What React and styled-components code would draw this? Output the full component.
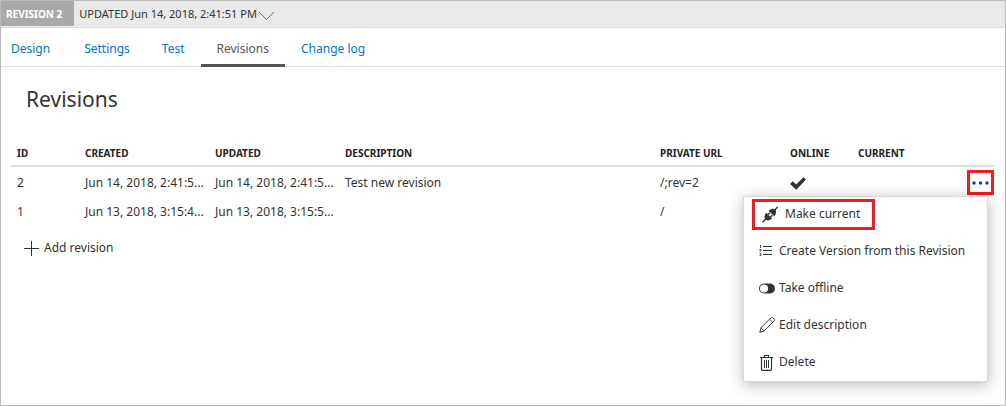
import React from "react";
import styled, { createGlobalStyle, css } from "styled-components";

const GlobalStyle = createGlobalStyle`
  *, *::before, *::after { box-sizing: border-box; }
  body {
    margin: 0;
    background: #fff;
    color: #333;
    font-family: "Noto Sans", "Open Sans", sans-serif;
    font-size: 12px;
    line-height: 18px;
  }
  button { font: inherit; color: inherit; background: none; border: 0; padding: 0; cursor: pointer; }
`;

const Frame = styled.div`
  min-height: 100vh;
  border: 1px solid #bbb;
`;

const RevisionBar = styled.header`
  display: flex;
  height: 27px;
  background: #e9e9e9;
  border-bottom: 1px solid #dcdcdc;
`;

const RevisionBadge = styled.span`
  height: 25px;
  padding: 0 12px 0 5px;
  background: #a9a9a9;
  color: #fff;
  font-size: 10px;
  font-weight: 700;
  line-height: 26px;
`;

const RevisionPicker = styled.button`
  display: flex;
  align-items: center;
  gap: 1px;
  margin-left: 5px;
  font-size: 11px;
`;

const Tabs = styled.nav`
  display: flex;
  height: 39px;
  border-bottom: 1px solid #ddd;
`;

const Tab = styled.a`
  height: 39px;
  padding: 0 16px;
  color: #0072d6;
  line-height: 41px;
  text-decoration: none;

  &:first-child { padding: 0 18px 0 10px; }

  ${(p) => p.$active && css`
    color: #555;
    border-bottom: 3px solid #555;
  `}
`;

const Content = styled.main`
  padding: 16px 11px 16px 10px;
`;

const Title = styled.h1`
  margin: 0 0 20px;
  padding-left: 15px;
  font-size: 21px;
  font-weight: 400;
  line-height: 32px;
`;

const Table = styled.table`
  width: 100%;
  border-collapse: separate;
  border-spacing: 0;
  table-layout: fixed;
`;

const Col = styled.col`
  width: ${(p) => p.$width};
`;

const HeadCell = styled.th`
  height: 32px;
  padding: 0 0 4px 6px;
  border-bottom: 2px solid #ddd;
  color: #222;
  font-size: 10px;
  font-weight: 700;
  line-height: 16px;
  text-align: left;
  vertical-align: bottom;
`;

const Cell = styled.td`
  height: 29px;
  padding: 2px 0 0 6px;
  white-space: nowrap;
`;

const ActionCell = styled(Cell)`
  padding-left: 0;
`;

const Actions = styled.div`
  position: relative;
  display: flex;
  justify-content: flex-end;
`;

const MoreButton = styled.button`
  display: flex;
  align-items: center;
  justify-content: center;
  width: 27px;
  height: 25px;
  border: 3px solid #ee1c25;
`;

const Menu = styled.div`
  position: absolute;
  top: 100%;
  right: 6px;
  width: 245px;
  margin-top: 1px;
  padding-bottom: 1px;
  border: 1px solid #d9d9d9;
  background: #fff;
  box-shadow: 0 3px 14px rgba(0, 0, 0, 0.28);
`;

const MenuItem = styled.button`
  display: flex;
  align-items: center;
  gap: 3px;
  width: 100%;
  height: 37px;
  padding-left: 15px;
  white-space: nowrap;

  ${(p) => p.$highlighted && css`
    gap: 6px;
    width: 123px;
    height: 31px;
    margin: 2px 0 2px 8px;
    padding: 0 0 2px 7px;
    border: 3px solid #ee1c25;
  `}
`;

const AddButton = styled.button`
  display: flex;
  align-items: center;
  gap: 4px;
  margin-top: 14px;
  padding-left: 13px;
`;

const Icon = styled.svg`
  display: block;
  flex: none;
`;

const ChevronIcon = () => (
  <Icon width="17" height="18" viewBox="0 0 17 18" fill="none" stroke="#806a5c">
    <path d="M1 7l7.500 7.500L16 7" />
  </Icon>
);

const CheckIcon = () => (
  <Icon width="16" height="14" viewBox="0 0 16 14" fill="#333" role="img" aria-label="Yes">
    <path d="M0 8L2.800 5.200 6.200 8.600 13.400 1.200 16 3.600 6.300 13.800z" />
  </Icon>
);

const DotsIcon = () => (
  <Icon width="17" height="4" viewBox="0 0 17 4" fill="#004b8d">
    <circle cx="2" cy="2" r="1.700" />
    <circle cx="8.500" cy="2" r="1.700" />
    <circle cx="15" cy="2" r="1.700" />
  </Icon>
);

const PlusIcon = () => (
  <Icon width="16" height="16" viewBox="0 0 16 16" fill="none" stroke="#333">
    <path d="M7.500 1v15M0 8.500h15" />
  </Icon>
);

const PlugIcon = () => (
  <Icon width="17" height="18" viewBox="0 0 17 18" fill="#333">
    <path d="M0.500 17.300L4 13.800M12.500 5.300L15.700 2.100" stroke="#333" strokeWidth="1.400" />
    <path d="M4.300 7.800L10 13.500C8 15.500 5.200 15.800 3.400 14.400 2 12.600 2.300 9.800 4.300 7.800z" />
    <path d="M6.600 5.700C8.600 3.500 11.600 3 13.300 4.500 14.800 6.200 14.300 9.200 12.100 11.200z" />
    <path d="M6 9.500L7.800 7.700M8.500 12L10.300 10.200" stroke="#333" strokeWidth="1.500" />
  </Icon>
);

const ListIcon = () => (
  <Icon width="17" height="14" viewBox="0 0 17 14" fill="none" stroke="#333">
    <path d="M4 2.500h9M4 6.500h9M4 10.500h9" strokeWidth="1.200" />
    <path d="M1.500 1v3M0.500 5.500h1.500v1.500h-1.500M0.500 9.500h1.500v2h-1.500" strokeWidth="0.900" />
  </Icon>
);

const SwitchIcon = () => (
  <Icon width="17" height="12" viewBox="0 0 17 12">
    <rect x="0" y="1.500" width="16" height="10" rx="5" fill="#333" />
    <circle cx="5" cy="6.500" r="4" fill="#fff" />
  </Icon>
);

const PencilIcon = () => (
  <Icon width="17" height="17" viewBox="0 0 17 17" fill="none" stroke="#333" strokeLinejoin="round">
    <path d="M0.800 16.300l1.200-4.600L11.700 2c0.700-0.700 1.500-0.800 2.300-0.100l0.900 0.900c0.700 0.800 0.700 1.600 0 2.300L5.200 15z" />
    <path d="M2 11.700l3.200 3.300M10.500 3.200l3.100 3.100" strokeWidth="0.900" />
  </Icon>
);

const TrashIcon = () => (
  <Icon width="17" height="18" viewBox="0 0 17 18" fill="none" stroke="#333">
    <path d="M1 4.500h13M5.500 4V2.500h4V4M2.500 5v11.500q0 0.800 0.800 0.800h8.400q0.800 0 0.800-0.800V5" strokeWidth="1.200" />
    <path d="M5.500 7v8M7.500 7v8M9.500 7v8" />
  </Icon>
);

const tabs = ["Design", "Settings", "Test", "Revisions", "Change log"];

const columns = [
  { label: "ID", width: "68px" },
  { label: "CREATED", width: "130px" },
  { label: "UPDATED", width: "130px" },
  { label: "DESCRIPTION", width: "auto" },
  { label: "PRIVATE URL", width: "130px" },
  { label: "ONLINE", width: "68px" },
  { label: "CURRENT", width: "115px" },
  { label: "", width: "27px" },
];

const revisions = [
  { id: 2, created: "Jun 14, 2018, 2:41:5...", updated: "Jun 14, 2018, 2:41:5...", description: "Test new revision", url: "/;rev=2", online: true, menuOpen: true },
  { id: 1, created: "Jun 13, 2018, 3:15:4...", updated: "Jun 13, 2018, 3:15:5...", description: "", url: "/" },
];

const menuItems = [
  { label: "Make current", icon: PlugIcon, highlighted: true },
  { label: "Create Version from this Revision", icon: ListIcon },
  { label: "Take offline", icon: SwitchIcon },
  { label: "Edit description", icon: PencilIcon },
  { label: "Delete", icon: TrashIcon },
];

const RevisionMenu = () => (
  <Menu role="menu">
    {menuItems.map(({ label, icon: ItemIcon, highlighted }) => (
      <MenuItem key={label} type="button" role="menuitem" $highlighted={highlighted}>
        <ItemIcon />
        {label}
      </MenuItem>
    ))}
  </Menu>
);

export default function App() {
  return (
    <>
      <GlobalStyle />
      <Frame>
        <RevisionBar>
          <RevisionBadge>REVISION 2</RevisionBadge>
          <RevisionPicker type="button">
            UPDATED Jun 14, 2018, 2:41:51 PM
            <ChevronIcon />
          </RevisionPicker>
        </RevisionBar>
        <Tabs>
          {tabs.map((tab) => (
            <Tab key={tab} href="#" $active={tab === "Revisions"}>{tab}</Tab>
          ))}
        </Tabs>
        <Content>
          <Title>Revisions</Title>
          <Table>
            <colgroup>
              {columns.map((c, i) => <Col key={i} $width={c.width} />)}
            </colgroup>
            <thead>
              <tr>{columns.map((c, i) => <HeadCell key={i}>{c.label}</HeadCell>)}</tr>
            </thead>
            <tbody>
              {revisions.map((r) => (
                <tr key={r.id}>
                  <Cell>{r.id}</Cell>
                  <Cell>{r.created}</Cell>
                  <Cell>{r.updated}</Cell>
                  <Cell>{r.description}</Cell>
                  <Cell>{r.url}</Cell>
                  <Cell>{r.online && <CheckIcon />}</Cell>
                  <Cell />
                  <ActionCell>
                    {r.menuOpen && (
                      <Actions>
                        <MoreButton type="button" aria-label="More actions"><DotsIcon /></MoreButton>
                        <RevisionMenu />
                      </Actions>
                    )}
                  </ActionCell>
                </tr>
              ))}
            </tbody>
          </Table>
          <AddButton type="button">
            <PlusIcon />
            Add revision
          </AddButton>
        </Content>
      </Frame>
    </>
  );
}
